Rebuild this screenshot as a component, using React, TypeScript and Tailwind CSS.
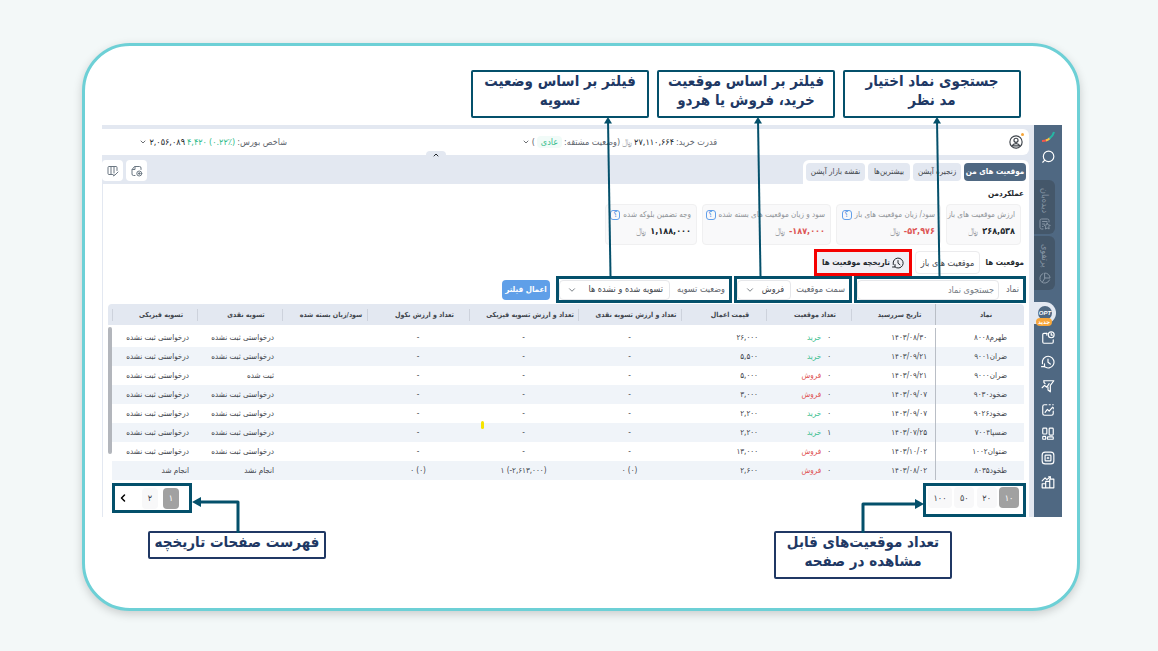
import { useState } from "react";
import type { ReactNode } from "react";
import { ChevronDown, ChevronLeft, ChevronUp } from "lucide-react";

type Side = "buy" | "sell";

interface PositionRow {
  symbol: string;
  date: string;
  count: string;
  side: Side;
  price: string;
  cash: string;
  physical: string;
  default: string;
  cashStatus: string;
  physicalStatus: string;
  marked?: boolean;
}

const NOT_REQUESTED = "درخواستی ثبت نشده";

const rows: PositionRow[] = [
  { symbol: "طهرم۸۰۰۸", date: "۱۴۰۳/۰۸/۳۰", count: "۰", side: "buy", price: "۲۶,۰۰۰", cash: "-", physical: "-", default: "-", cashStatus: NOT_REQUESTED, physicalStatus: NOT_REQUESTED },
  { symbol: "ضران۹۰۰۱", date: "۱۴۰۳/۰۹/۲۱", count: "۰", side: "buy", price: "۵,۵۰۰", cash: "-", physical: "-", default: "-", cashStatus: NOT_REQUESTED, physicalStatus: NOT_REQUESTED },
  { symbol: "ضران۹۰۰۰", date: "۱۴۰۳/۰۹/۲۱", count: "۰", side: "sell", price: "۵,۰۰۰", cash: "-", physical: "-", default: "-", cashStatus: "ثبت شده", physicalStatus: NOT_REQUESTED },
  { symbol: "ضخود۹۰۳۰", date: "۱۴۰۳/۰۹/۰۷", count: "۰", side: "sell", price: "۳,۰۰۰", cash: "-", physical: "-", default: "-", cashStatus: NOT_REQUESTED, physicalStatus: NOT_REQUESTED },
  { symbol: "ضخود۹۰۲۶", date: "۱۴۰۳/۰۹/۰۷", count: "۰", side: "buy", price: "۲,۲۰۰", cash: "-", physical: "-", default: "-", cashStatus: NOT_REQUESTED, physicalStatus: NOT_REQUESTED },
  { symbol: "ضسپا۷۰۰۴", date: "۱۴۰۳/۰۷/۲۵", count: "۱", side: "buy", price: "۲,۲۰۰", cash: "-", physical: "-", default: "-", cashStatus: NOT_REQUESTED, physicalStatus: NOT_REQUESTED, marked: true },
  { symbol: "ضتوان۱۰۰۲", date: "۱۴۰۳/۱۰/۰۲", count: "۰", side: "sell", price: "۱۳,۰۰۰", cash: "-", physical: "-", default: "-", cashStatus: NOT_REQUESTED, physicalStatus: NOT_REQUESTED },
  { symbol: "طخود۸۰۳۵", date: "۱۴۰۳/۰۸/۰۲", count: "۰", side: "sell", price: "۲,۶۰۰", cash: "۰ (۰)", physical: "۱ (-۲,۶۱۳,۰۰۰)", default: "۰ (۰)", cashStatus: "انجام نشد", physicalStatus: "انجام شد" },
];

const columns = [
  { title: "نماد", width: "w-[89px]" },
  { title: "تاریخ سررسید", width: "w-[84px]" },
  { title: "تعداد موقعیت", width: "w-[85px]" },
  { title: "قیمت اعمال", width: "w-[85px]" },
  { title: "تعداد و ارزش تسویه نقدی", width: "w-[103px]" },
  { title: "تعداد و ارزش تسویه فیزیکی", width: "w-[109px]" },
  { title: "تعداد و ارزش نکول", width: "w-[102px]" },
  { title: "سود/زیان بسته شده", width: "w-[85px]" },
  { title: "تسویه نقدی", width: "w-[85px]" },
  { title: "تسویه فیزیکی", width: "w-[85px]" },
];

const stats = [
  { label: "ارزش موقعیت های باز", value: "۲۶۸,۵۳۸", negative: false, help: false, width: "w-[75px]" },
  { label: "سود/ زیان موقعیت های باز", value: "-۵۲,۹۷۶", negative: true, help: true, width: "w-[105px]" },
  { label: "سود و زیان موقعیت های بسته شده", value: "-۱۸۷,۰۰۰", negative: true, help: true, width: "w-[129px]" },
  { label: "وجه تضمین بلوکه شده", value: "۱,۱۸۸,۰۰۰", negative: false, help: true, width: "w-[92px]" },
];

const mainTabs = [
  { title: "موقعیت های من", width: "w-[62px]" },
  { title: "زنجیره آپشن", width: "w-[48px]" },
  { title: "بیشترین‌ها", width: "w-[42px]" },
  { title: "نقشه بازار آپشن", width: "w-[59px]" },
];

function Icon({ children, className = "size-[14px]" }: { children: ReactNode; className?: string }) {
  return (
    <svg viewBox="0 0 24 24" fill="none" stroke="currentColor" strokeWidth="2" strokeLinecap="round" strokeLinejoin="round" className={className} aria-hidden="true">
      {children}
    </svg>
  );
}

function HistoryIcon({ className }: { className?: string }) {
  return (
    <Icon className={className}>
      <path d="M6 20A10 10 0 1 0 2.500 10v5" />
      <path d="M1 20h5v-5" />
      <path d="M12 7v5.500l4 3" />
    </Icon>
  );
}

const sidebarItems: { label: string; icon: ReactNode }[] = [
  {
    label: "سفارش زمان‌دار",
    icon: (
      <Icon>
        <path d="M10 4H5a2 2 0 0 0-2 2v13a2 2 0 0 0 2 2h14a2 2 0 0 0 2-2v-4" />
        <path d="M10 4v3" />
        <circle cx="17.500" cy="6.500" r="5" />
        <path d="M17.500 4v3h2" />
      </Icon>
    ),
  },
  { label: "تاریخچه", icon: <HistoryIcon className="size-[14px]" /> },
  {
    label: "فیلتر",
    icon: (
      <Icon>
        <path d="M5 3h17l-6 8v11l-4-3v-5" />
        <path d="M5 3v3l2 2" />
        <path d="M2 15l4-4 4 3 4-6" />
      </Icon>
    ),
  },
  {
    label: "نمودار",
    icon: (
      <Icon>
        <path d="M10 3H6a3 3 0 0 0-3 3v12a3 3 0 0 0 3 3h12a3 3 0 0 0 3-3v-4" />
        <path d="M14 3h2M20 3h1M21 8v2" />
        <path d="M7 16l4-5 3 3 6-7" />
      </Icon>
    ),
  },
  {
    label: "ابزارها",
    icon: (
      <Icon>
        <rect x="3" y="2" width="7" height="10" rx="1.500" />
        <rect x="14" y="2" width="7" height="12" rx="1.500" />
        <rect x="3" y="16" width="5" height="5" rx="1" />
        <rect x="11" y="17" width="10" height="4" rx="1" />
      </Icon>
    ),
  },
  {
    label: "بازار",
    icon: (
      <Icon>
        <rect x="2" y="2" width="20" height="20" rx="5" />
        <rect x="7" y="7" width="10" height="10" rx="1" />
        <path d="M12 11v2M10.500 12h3" />
      </Icon>
    ),
  },
  {
    label: "گزارش",
    icon: (
      <Icon>
        <path d="M2 22v-7h6v7zM8 22V11h7v11zM15 22V7h7v15z" />
        <path d="M2 10l5-5 3 3 6-5" />
        <path d="M13 3h3v3" />
      </Icon>
    ),
  },
];

function Sidebar() {
  return (
    <aside className="flex w-7 shrink-0 flex-col bg-[#4f6882] text-white">
      <a href="#home" aria-label="خانه" className="mt-1 flex h-4 items-center justify-center">
        <svg viewBox="0 0 14 12" className="h-3 w-[14px]" fill="none" strokeWidth="2" aria-hidden="true">
          <path d="M1 10q3 0 5-1" stroke="#f0574e" />
          <path d="M5 9.500q2-.5 4-2.500" stroke="#f6c445" />
          <path d="M8.500 7.500Q12 5 13 1" stroke="#25b7a4" />
        </svg>
      </a>
      <button type="button" aria-label="جستجو" className="mt-1 flex h-4 items-center justify-center">
        <Icon>
          <circle cx="13" cy="11" r="9" />
          <path d="M6.500 17.500L3 21" />
        </Icon>
      </button>
      <div className="mt-[15px] flex w-[21px] flex-col gap-[2px] self-end">
        <button type="button" className="flex h-[54px] flex-col items-center justify-between rounded-s-md bg-[#44576a] pb-1 pt-2 text-[#8796a5]">
          <span className="text-[9px] leading-[10px] [writing-mode:vertical-rl]">دیده‌بان</span>
          <Icon className="size-3">
            <path d="M20 8V5a3 3 0 0 0-3-3H5a3 3 0 0 0-3 3v14a3 3 0 0 0 3 3h3" />
            <path d="M7 7h9M7 12h4M7 17h1" />
            <path d="M16.500 10l2 4 4 .5-3 3 .8 4.500-3.800-2-3.800 2 .8-4.500-3-3 4-.5z" />
          </Icon>
        </button>
        <button type="button" className="flex h-[54px] flex-col items-center justify-between rounded-s-md bg-[#44576a] pb-[6px] pt-2 text-[#8796a5]">
          <span className="text-[9px] leading-[10px] [writing-mode:vertical-rl]">پرتفوی</span>
          <Icon className="size-3">
            <path d="M8 3a10 10 0 1 0 13 13" />
            <path d="M12 2a10 10 0 0 1 10 10H12z" />
            <path d="M12 12l-5 8" />
          </Icon>
        </button>
      </div>
      <a href="#options" className="relative mt-3 flex h-[22px] w-[22px] items-center justify-center self-end rounded-s-full bg-[#e3e8f1]">
        <span className="flex size-[14px] items-center justify-center rounded-full bg-[#4f6882] font-['Liberation_Sans'] text-[6px] font-bold italic leading-none">OPT</span>
        <span className="absolute -bottom-[2px] right-1 h-2 w-4 rounded-full bg-[#f7a63a] text-center text-[6px] font-bold leading-[8px]">جدید</span>
      </a>
      <nav className="mt-[7px] flex flex-col gap-[10px]">
        {sidebarItems.map((item) => (
          <a key={item.label} href="#tools" aria-label={item.label} className="flex h-[14px] items-center justify-center">
            {item.icon}
          </a>
        ))}
      </nav>
    </aside>
  );
}

function TopBar() {
  return (
    <header className="relative mt-1 grid h-[26px] grid-cols-[312fr_430fr_185fr] items-center rounded-s-md bg-white text-[9px] leading-3 text-[#5f666e]">
      <div className="flex ps-[6px]">
        <button type="button" aria-label="حساب کاربری" className="relative text-[#3f454c]">
          <Icon>
            <circle cx="12" cy="12" r="10.500" />
            <circle cx="12" cy="9" r="3.500" />
            <path d="M5.500 18.500c2-5 11-5 13 0z" />
          </Icon>
          <span className="absolute -right-px -top-[2px] size-[3px] rounded-full bg-[#f7a63a]" />
        </button>
      </div>
      <div className="flex items-center gap-[2px] whitespace-nowrap">
        <span>قدرت خرید:</span>
        <span dir="ltr" className="text-[#22272d]">۲۷,۱۱۰,۶۶۴</span>
        <span className="text-[#a4a8ad]">﷼</span>
        <span>(وضعیت مشتقه:</span>
        <span className="rounded bg-[#f1fbf8] px-1 text-[#34bd8c]">عادی</span>
        <span>)</span>
        <ChevronDown className="size-2 text-[#22272d]" />
      </div>
      <div className="flex items-center gap-[2px] whitespace-nowrap">
        <span>شاخص بورس:</span>
        <span dir="ltr" className="text-[#34bd8c]">(۰.۲۲٪)</span>
        <span dir="ltr" className="text-[#34bd8c]">۴,۴۲۰</span>
        <span dir="ltr" className="text-[#22272d]">۲,۰۵۶,۰۸۹</span>
        <ChevronDown className="size-2 text-[#22272d]" />
      </div>
      <button type="button" aria-label="بستن نوار" className="absolute -bottom-1 left-[35%] flex h-2 w-5 items-center justify-center rounded-t bg-[#e3e8f1] text-[#22272d]">
        <ChevronUp className="size-2" strokeWidth={3} />
      </button>
    </header>
  );
}

function MainTabs() {
  return (
    <div className="mt-[5px] flex h-6 items-start justify-between">
      <div className="flex h-6 gap-[3px] rounded-t-md bg-white px-[3px] pt-[3px]">
        {mainTabs.map((tab, i) => (
          <button
            key={tab.title}
            type="button"
            className={`h-[18px] whitespace-nowrap rounded text-[8px] leading-3 ${tab.width} ${
              i === 0 ? "bg-[#4f6882] font-bold text-white" : "bg-[#e3e8f1] text-[#3f454c]"
            }`}
          >
            {tab.title}
          </button>
        ))}
      </div>
      <div className="flex gap-[3px] text-[#6b7782]">
        <button type="button" aria-label="خروجی" className="flex size-[21px] items-center justify-center rounded bg-white">
          <Icon className="size-3">
            <path d="M8 21H5a3 3 0 0 1-3-3V9l5-6h10a3 3 0 0 1 3 3v3M3 9h5V4" />
            <circle cx="16.500" cy="17" r="5" />
            <path d="M16.500 15v4M14.500 17h4" />
          </Icon>
        </button>
        <button type="button" aria-label="ستون‌ها" className="flex size-[21px] items-center justify-center rounded bg-white">
          <Icon className="size-3">
            <path d="M11 19H4a2 2 0 0 1-2-2V5a2 2 0 0 1 2-2h14a2 2 0 0 1 2 2v6M8 3v16M14 3v13" />
            <path d="M22 14l-7 7-2 1 1-3" />
          </Icon>
        </button>
      </div>
    </div>
  );
}

function StatCards() {
  return (
    <div className="flex gap-[5px] pe-[3px] ps-2">
      {stats.map((stat) => (
        <div key={stat.label} className={`flex h-[41px] flex-col justify-between whitespace-nowrap rounded border border-[#f0f0f1] bg-[#f9f9fa] px-[5px] pb-[7px] pt-[4px] ${stat.width}`}>
          <div className="flex items-center gap-[3px] text-[8px] leading-3 text-[#8f9398]">
            <span>{stat.label}</span>
            {stat.help && (
              <span className="flex size-[10px] shrink-0 items-center justify-center rounded-[3px] border border-[#62a0ea] text-[8px] leading-none text-[#3f86dc]">؟</span>
            )}
          </div>
          <div className="flex items-center gap-1 text-[9px] leading-3">
            <b dir="ltr" className={stat.negative ? "text-[#dd5555]" : "text-[#22272d]"}>{stat.value}</b>
            <span className="text-[#9a9ea3]">﷼</span>
          </div>
        </div>
      ))}
    </div>
  );
}

function PositionTabs() {
  return (
    <div className="mt-1 flex h-[27px] items-center gap-[3px] ps-[5px] text-[8px] leading-3 text-[#3f454c]">
      <h2 className="w-[41px] whitespace-nowrap font-bold text-[#22272d]">موقعیت ها</h2>
      <button type="button" className="h-[23px] w-[65px] whitespace-nowrap rounded border border-[#ebebed] bg-white text-[9px]">
        موقعیت های باز
      </button>
      <button type="button" className="flex h-[27px] w-[98px] items-center justify-center gap-[2px] whitespace-nowrap border-[3px] border-[#f50000] bg-[#efeff5] font-bold text-[#22272d]">
        <HistoryIcon className="size-3 shrink-0" />
        تاریخچه موقعیت ها
      </button>
    </div>
  );
}

function Filters({ side, onSide, status, onStatus }: { side: string; onSide: (v: string) => void; status: string; onStatus: (v: string) => void }) {
  const group = "flex h-[27px] items-center justify-between whitespace-nowrap border-[3px] border-[#04506b] bg-white ps-1";
  const field = "h-5 rounded border border-[#e6e7ea] bg-white text-[9px] text-[#3f454c] outline-none";

  return (
    <form className="flex items-center gap-[2px] ps-[3px] text-[9px] text-[#5f666e]" onSubmit={(e) => e.preventDefault()}>
      <div className={`${group} w-[172px]`}>
        <label htmlFor="symbol">نماد</label>
        <input id="symbol" type="text" placeholder="جستجوی نماد" className={`${field} w-[142px] px-1 placeholder:text-[#777d84]`} />
      </div>
      <div className={`${group} w-[118px]`}>
        <label htmlFor="side">سمت موقعیت</label>
        <span className="relative">
          <select id="side" value={side} onChange={(e) => onSide(e.target.value)} className={`${field} w-[54px] appearance-none ps-[6px]`}>
            <option value="sell">فروش</option>
            <option value="buy">خرید</option>
            <option value="all">همه</option>
          </select>
          <ChevronDown className="pointer-events-none absolute left-2 top-[5px] size-[10px]" />
        </span>
      </div>
      <div className={`${group} w-[176px]`}>
        <label htmlFor="status">وضعیت تسویه</label>
        <span className="relative">
          <select id="status" value={status} onChange={(e) => onStatus(e.target.value)} className={`${field} w-[111px] appearance-none ps-[6px]`}>
            <option value="all">تسویه شده و نشده ها</option>
            <option value="settled">تسویه شده</option>
            <option value="open">تسویه نشده</option>
          </select>
          <ChevronDown className="pointer-events-none absolute left-2 top-[5px] size-[10px]" />
        </span>
      </div>
      <button type="submit" className="ms-1 h-5 w-12 whitespace-nowrap rounded bg-[#5f9fe8] text-[8px] font-bold text-white">
        اعمال فیلتر
      </button>
    </form>
  );
}

function PositionsTable() {
  return (
    <div className="relative mt-px px-[5px]">
      <table className="w-full table-fixed border-separate border-spacing-0 text-[8px] leading-3 text-[#3f454c]">
        <thead>
          <tr className="h-[21px] text-[7px]">
            {columns.map((col, i) => (
              <th
                key={col.title}
                scope="col"
                className={`whitespace-nowrap bg-[#e3e8f1] p-0 font-bold ${col.width} ${i === 0 ? "rounded-tr border-l border-[#b9bec6]" : ""}`}
              >
                <div className={`flex items-center justify-center pl-3 ${i === 0 ? "" : "border-l border-[#cdd2dc]"}`}>{col.title}</div>
              </th>
            ))}
            <td className="w-[4px] rounded-tl bg-[#e3e8f1] p-0" />
          </tr>
        </thead>
        <tbody>
          <tr className="h-[3px]">
            <td colSpan={11} className="p-0" />
          </tr>
          {rows.map((row, i) => (
            <tr key={row.symbol} className={`h-[19px] whitespace-nowrap ${i % 2 ? "bg-[#f0f4f9]" : ""}`}>
              <td className="border-l border-[#b9bec6] p-0 ps-[17px]">{row.symbol}</td>
              <td className="p-0 ps-2"><span dir="ltr">{row.date}</span></td>
              <td className="p-0 ps-5">
                {row.count}
                <span className={`ms-[6px] ${row.side === "buy" ? "text-[#34bd8c]" : "text-[#e05252]"}`}>
                  {row.side === "buy" ? "خرید" : "فروش"}
                </span>
              </td>
              <td className="p-0 ps-2"><span dir="ltr">{row.price}</span></td>
              <td className="p-0 text-center"><span dir="ltr">{row.cash}</span></td>
              <td className="relative p-0 text-center">
                <span dir="ltr">{row.physical}</span>
                {row.marked && <span className="absolute left-3 top-[-2px] h-2 w-[3px] rounded-sm bg-[#f5e400]" />}
              </td>
              <td className="p-0 text-center"><span dir="ltr">{row.default}</span></td>
              <td className="p-0" />
              <td className="p-0 ps-2">{row.cashStatus}</td>
              <td className="p-0 ps-2">{row.physicalStatus}</td>
              <td className="bg-white p-0" />
            </tr>
          ))}
        </tbody>
      </table>
      <div className="absolute left-[5px] top-[23px] h-[127px] w-[4px] rounded-full bg-[#b3b6bc]" />
    </div>
  );
}

function Pagination() {
  const [size, setSize] = useState("۱۰");
  const [page, setPage] = useState("۱");

  return (
    <div className="mt-[3px] flex items-start justify-between pe-[9px] ps-[3px] text-[9px] leading-3">
      <div className="flex h-[34px] w-[103px] justify-between border-[3px] border-[#04506b] pe-[2px] ps-1 pt-px">
        {["۱۰", "۲۰", "۵۰", "۱۰۰"].map((n) => (
          <button
            key={n}
            type="button"
            onClick={() => setSize(n)}
            className={`h-[21px] rounded ${n === "۱۰۰" ? "w-6" : "w-5"} ${size === n ? "bg-[#a1a1a1] text-white" : "bg-[#f8f8f9] text-[#3f454c]"}`}
          >
            {n}
          </button>
        ))}
      </div>
      <div className="flex h-[30px] w-20 items-center gap-[5px] border-[3px] border-[#04506b] ps-[10px]">
        {["۱", "۲"].map((n) => (
          <button
            key={n}
            type="button"
            onClick={() => setPage(n)}
            className={`h-[21px] w-4 rounded ${page === n ? "bg-[#a1a1a1] text-white" : "bg-[#f8f8f9] text-[#3f454c]"}`}
          >
            {n}
          </button>
        ))}
        <button type="button" aria-label="صفحه بعد" className="ms-2 text-black">
          <ChevronLeft className="size-3" strokeWidth={3} />
        </button>
      </div>
    </div>
  );
}

function Callout({ children, className = "", arrow }: { children: ReactNode; className?: string; arrow: ReactNode }) {
  return (
    <div className={`relative w-[178px] whitespace-nowrap rounded-[2px] border-2 bg-white text-center text-[15px] font-bold leading-[19px] text-[#203864] ${className}`}>
      {children}
      {arrow}
    </div>
  );
}

// thin line that drops from a callout to the control it explains
function DropArrow({ className }: { className: string }) {
  return (
    <svg viewBox="0 0 12 160" className={`pointer-events-none absolute top-full z-10 h-40 w-3 ${className}`} aria-hidden="true">
      <path d="M6 4L8.500 160" stroke="#04506b" strokeWidth="2" />
      <path d="M6 1l4 6.500H2z" fill="#04506b" />
    </svg>
  );
}

export default function App() {
  const [side, setSide] = useState("sell");
  const [status, setStatus] = useState("all");

  return (
    <div dir="rtl" lang="fa" className="flex min-h-screen flex-col bg-[#f3f8f8] pb-10 pe-[82px] ps-[78px] pt-[43px] font-['DejaVu_Sans_Condensed','DejaVu_Sans',sans-serif]">
      <div className="flex-1 rounded-[48px] border-[3px] border-[#6dd0d6] bg-white pb-7 pe-[17px] ps-[15px] pt-6 shadow-[0_3px_10px_rgba(0,0,0,0.18)]">
        <div className="flex gap-2 ps-[41px]">
          <Callout className="h-12 border-[#04506b]" arrow={<DropArrow className="right-[76px]" />}>
            جستجوی نماد اختیار
            <br />
            مد نظر
          </Callout>
          <Callout className="h-12 border-[#04506b]" arrow={<DropArrow className="right-[69px]" />}>
            فیلتر بر اساس موقعیت
            <br />
            خرید، فروش یا هردو
          </Callout>
          <Callout className="h-12 border-[#04506b]" arrow={<DropArrow className="right-[33px]" />}>
            فیلتر بر اساس وضعیت
            <br />
            تسویه
          </Callout>
        </div>

        <div className="mt-[7px] flex">
          <Sidebar />
          <main className="min-w-0 flex-1 bg-[#e3e8f1] ps-[5px]">
            <TopBar />
            <MainTabs />
            <section className="border-l border-[#e3e8f1] bg-white">
              <h2 className="h-5 ps-[5px] text-[8px] font-bold leading-5 text-[#22272d]">عملکردمن</h2>
              <StatCards />
              <PositionTabs />
              <Filters side={side} onSide={setSide} status={status} onStatus={setStatus} />
              <PositionsTable />
              <Pagination />
            </section>
          </main>
        </div>

        <div className="mt-[14px] flex items-start justify-between pe-[46px] ps-[110px]">
          <Callout
            className="h-12 border-[#203864]"
            arrow={
              <svg viewBox="0 0 64 36" className="pointer-events-none absolute bottom-full right-[26px] h-9 w-16" aria-hidden="true">
                <path d="M3 36V7H56" fill="none" stroke="#04506b" strokeWidth="3" strokeLinejoin="round" />
                <path d="M64 7l-9 5V2z" fill="#04506b" />
              </svg>
            }
          >
            تعداد موقعیت‌های قابل
            <br />
            مشاهده در صفحه
          </Callout>
          <Callout
            className="h-7 border-[#203864]"
            arrow={
              <svg viewBox="0 0 48 36" className="pointer-events-none absolute bottom-full left-[42px] h-9 w-12" aria-hidden="true">
                <path d="M46 36V5H8" fill="none" stroke="#04506b" strokeWidth="3" strokeLinejoin="round" />
                <path d="M0 5l9-5v10z" fill="#04506b" />
              </svg>
            }
          >
            فهرست صفحات تاریخچه
          </Callout>
        </div>
      </div>
    </div>
  );
}
